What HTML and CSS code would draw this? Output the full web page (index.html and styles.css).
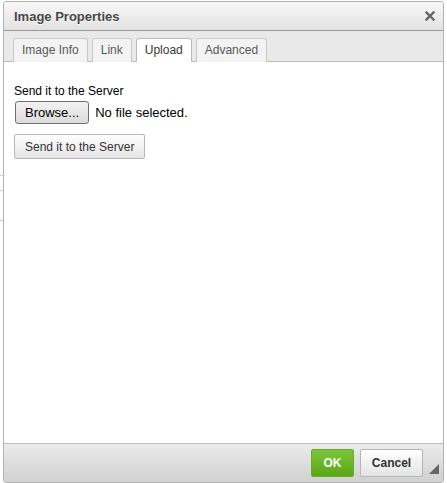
FILE: index.html
```html
<!DOCTYPE html>
<html lang="en">
<head>
  <meta charset="UTF-8">
  <title>Image Properties</title>
  <link rel="stylesheet" href="styles.css">
</head>
<body>
  <div class="page-lines">
    <span class="line l1"></span>
    <span class="line l2"></span>
    <span class="line l3"></span>
  </div>
  <div class="dialog">
    <div class="title">
      <span>Image Properties</span>
      <svg class="close" width="10" height="10" viewBox="0 0 10 10">
        <path d="M1.5 1.5 L8.5 8.5 M8.5 1.5 L1.5 8.5" stroke="#666" stroke-width="2.4" stroke-linecap="square"/>
      </svg>
    </div>
    <div class="tabs">
      <div class="tab">Image Info</div>
      <div class="tab">Link</div>
      <div class="tab selected">Upload</div>
      <div class="tab">Advanced</div>
    </div>
    <div class="contents">
      <label class="label">Send it to the Server</label>
      <div class="file-row">
        <button class="browse">Browse...</button>
        <span class="file-name">No file selected.</span>
      </div>
      <button class="btn">Send it to the Server</button>
    </div>
    <div class="footer">
      <button class="ok">OK</button>
      <button class="cancel">Cancel</button>
      <span class="resize"></span>
    </div>
  </div>
</body>
</html>
```

FILE: styles.css
```css
body {
  margin: 0;
  background: #fff;
  font-family: 'Liberation Sans', Arial, sans-serif;
  font-size: 12px;
  color: #333;
  height: 483px;
  overflow: hidden;
}
.page-lines .line {
  position: absolute;
  left: 0;
  width: 3px;
  border-top: 1px dotted #bbb;
}
.l1 { top: 175px; }
.l2 { top: 190px; }
.l3 { top: 220px; }
.dialog {
  margin: 1px 0 0 3px;
  width: 441px;
  height: 482px;
  border: 1px solid #b2b2b2;
  border-radius: 3px;
  display: flex;
  flex-direction: column;
  background: #fff;
  box-sizing: border-box;
  overflow: hidden;
}
.title {
  height: 28px;
  background: linear-gradient(#f8f8f8, #e2e2e2);
  border-bottom: 1px solid #999;
  display: flex;
  align-items: center;
  justify-content: space-between;
  padding: 0 8px 0 10px;
  font-weight: bold;
  font-size: 13px;
  color: #474747;
  text-shadow: 0 1px 0 rgba(255,255,255,.75);
}
.close {
  display: block;
}
.tabs {
  height: 30px;
  background: #e9e9e9;
  border-bottom: 1px solid #bbb;
  display: flex;
  align-items: flex-end;
  gap: 4px;
  padding-left: 9px;
}
.tab {
  height: 22px;
  line-height: 22px;
  padding: 0 8px;
  border: 1px solid #c9c9c9;
  border-bottom: none;
  border-radius: 3px 3px 0 0;
  background: #f3f3f3;
  color: #595959;
  margin-bottom: -1px;
  padding-bottom: 1px;
}
.tab.selected {
  background: #fff;
  color: #383838;
  border-color: #bbb;
}
.contents {
  flex: 1;
  padding: 22px 10px 0 10px;
  color: #000;
}
.label {
  display: block;
  margin-bottom: 3px;
}
.file-row {
  display: flex;
  align-items: center;
  gap: 6px;
  margin-left: 1px;
  font-size: 13px;
  margin-bottom: 10px;
}
.browse {
  font-family: inherit;
  font-size: 13px;
  height: 23px;
  padding: 0 9px;
  border: 1px solid #707070;
  border-radius: 3px;
  background: linear-gradient(#f2f2f2, #dcdcdc);
  color: #000;
}
.btn {
  font-family: inherit;
  font-size: 12px;
  height: 25px;
  padding: 0 10px;
  border: 1px solid #b6b6b6;
  border-radius: 2px;
  background: linear-gradient(#fff, #e4e4e4);
  color: #333;
}
.footer {
  height: 38px;
  border-top: 1px solid #bfbfbf;
  background: linear-gradient(#ebebeb, #cfd1cf);
  display: flex;
  align-items: center;
  justify-content: flex-end;
  gap: 6px;
  padding-right: 20px;
  position: relative;
}
.ok, .cancel {
  font-family: inherit;
  font-weight: bold;
  font-size: 12px;
  height: 28px;
  border-radius: 2px;
  padding: 0 10px;
}
.ok {
  width: 43px;
  padding: 0;
  color: #fff;
  border: 1px solid #6ba82d;
  background: linear-gradient(#7cc63b, #5aa614);
}
.cancel {
  width: 63px;
  padding: 0;
  color: #333;
  border: 1px solid #b6b6b6;
  background: linear-gradient(#fff, #e4e4e4);
}
.resize {
  position: absolute;
  right: 4px;
  bottom: 8px;
  width: 0;
  height: 0;
  border-left: 10px solid transparent;
  border-bottom: 10px solid #666;
}
```
